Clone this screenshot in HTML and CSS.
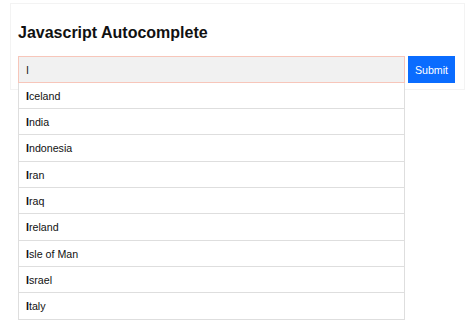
FILE: index.html
```html
<!DOCTYPE html>
<html>
<head>
<meta charset="utf-8">
<link rel="stylesheet" href="styles.css">
</head>
<body>
<div class="card">
  <h2 class="title">Javascript Autocomplete</h2>
  <form class="form" autocomplete="off">
    <div class="field">
      <input class="input" type="text" value="I">
      <div class="list">
        <div class="item"><strong>I</strong>celand</div>
        <div class="item"><strong>I</strong>ndia</div>
        <div class="item"><strong>I</strong>ndonesia</div>
        <div class="item"><strong>I</strong>ran</div>
        <div class="item"><strong>I</strong>raq</div>
        <div class="item"><strong>I</strong>reland</div>
        <div class="item"><strong>I</strong>sle of Man</div>
        <div class="item"><strong>I</strong>srael</div>
        <div class="item"><strong>I</strong>taly</div>
      </div>
    </div>
    <button class="btn" type="button">Submit</button>
  </form>
</div>
</body>
</html>
```
FILE: styles.css
```css
html, body {
  margin: 0;
  padding: 0;
  background: #fff;
  font-family: "Liberation Sans", Arial, sans-serif;
  color: #111;
}
html {
  height: 100%;
}
body {
  min-height: 100%;
  overflow: visible;
}
.card {
  box-sizing: border-box;
  margin: 3px 0 0 10px;
  width: 455px;
  height: 87px;
  padding: 20px 9px 0 7px;
  border: 1px solid #f3f3f3;
}
.title {
  margin: 0 0 14px 0;
  font-size: 16px;
  line-height: 18.4px;
  font-weight: bold;
  color: #111;
}
.form {
  display: flex;
  gap: 3.4px;
  margin: 0;
}
.field {
  position: relative;
  flex: 1;
}
.input {
  box-sizing: border-box;
  display: block;
  width: 100%;
  height: 26.4px;
  margin: 0;
  padding: 0 7px;
  border: 1px solid #f7c6ba;
  background: #f1f1f1;
  font-family: "Liberation Sans", Arial, sans-serif;
  font-size: 10.67px;
  color: #222;
  outline: none;
}
.list {
  position: absolute;
  top: 100%;
  left: 0;
  right: 0;
  border-left: 1px solid #dedede;
  border-right: 1px solid #dedede;
  background: #fff;
  z-index: 2;
}
.item {
  box-sizing: border-box;
  height: 26.33px;
  padding: 7px 7px 0 7px;
  font-size: 10.67px;
  line-height: 12px;
  border-bottom: 1px solid #dedede;
  color: #111;
  background: #fff;
}
.item strong {
  font-weight: bold;
}
.btn {
  box-sizing: border-box;
  width: 47px;
  height: 26.4px;
  margin: 0;
  padding: 0;
  border: none;
  background: #0a6cff;
  color: #fff;
  font-family: "Liberation Sans", Arial, sans-serif;
  font-size: 10.67px;
}
```
